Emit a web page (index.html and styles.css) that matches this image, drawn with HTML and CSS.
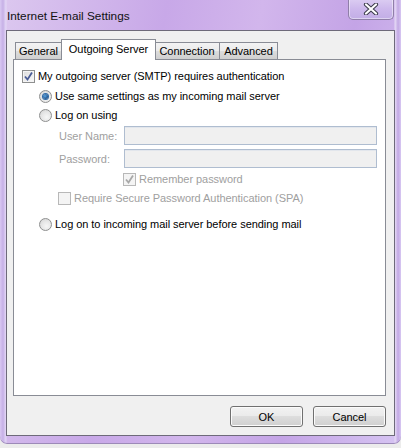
FILE: index.html
```html
<!DOCTYPE html>
<html>
<head>
<meta charset="utf-8">
<link rel="stylesheet" href="styles.css">
</head>
<body>
<div class="window">
  <div class="titlebar">
    <span class="title">Internet E-mail Settings</span>
    <div class="close">
      <svg width="20" height="12" viewBox="0 0 20 12">
        <path d="M5 1.5 L15 10.5 M15 1.5 L5 10.5" stroke="#3b3b4a" stroke-width="4.2" stroke-linecap="round"/>
        <path d="M5 1.5 L15 10.5 M15 1.5 L5 10.5" stroke="#ffffff" stroke-width="2.2" stroke-linecap="round"/>
      </svg>
    </div>
  </div>
  <div class="client">
    <div class="tabs">
      <div class="tab t-general">General</div>
      <div class="tab active t-outgoing">Outgoing Server</div>
      <div class="tab t-connection">Connection</div>
      <div class="tab t-advanced">Advanced</div>
    </div>
    <div class="panel">
      <div class="row r1">
        <span class="check checked"><svg width="11" height="11" viewBox="0 0 11 11"><path d="M2 5.5 L4.5 8.5 L9 1.5" fill="none" stroke="#4a5c96" stroke-width="1.8"/></svg></span>
        <span class="lbl">My outgoing server (SMTP) requires authentication</span>
      </div>
      <div class="row r2 ind1">
        <span class="radio on"><span class="dot"></span></span>
        <span class="lbl">Use same settings as my incoming mail server</span>
      </div>
      <div class="row r3 ind1">
        <span class="radio"></span>
        <span class="lbl">Log on using</span>
      </div>
      <div class="field f1">
        <span class="flabel">User Name:</span>
        <span class="input"></span>
      </div>
      <div class="field f2">
        <span class="flabel">Password:</span>
        <span class="input"></span>
      </div>
      <div class="row r6 ind3">
        <span class="check disabled"><svg width="11" height="11" viewBox="0 0 11 11"><path d="M2 5.5 L4.5 8.5 L9 1.5" fill="none" stroke="#a8a8a8" stroke-width="1.8"/></svg></span>
        <span class="lbl dis">Remember password</span>
      </div>
      <div class="row r7 ind2">
        <span class="check disabled"></span>
        <span class="lbl dis">Require Secure Password Authentication (SPA)</span>
      </div>
      <div class="row r8 ind1">
        <span class="radio"></span>
        <span class="lbl">Log on to incoming mail server before sending mail</span>
      </div>
    </div>
    <div class="buttons">
      <div class="btn">OK</div>
      <div class="btn">Cancel</div>
    </div>
  </div>
</div>
</body>
</html>
```
FILE: styles.css
```css
html, body {
  margin: 0;
  padding: 0;
}
body {
  width: 401px;
  height: 448px;
  background: #ececec;
  font-family: "Liberation Sans", Arial, sans-serif;
  font-size: 11px;
  letter-spacing: -0.05px;
  overflow: hidden;
}
.window {
  width: 401px;
  height: 444px;
  box-sizing: border-box;
  padding: 0 6px 8px 6px;
  border-radius: 0 0 7px 7px;
  background:
    linear-gradient(to right, #d9c8f2 0px, #c6b0e6 3px, #e4d8f6 6px, transparent 7px, transparent 394px, #e6daf6 395px, #c2a8e4 398px, #d8c8f2 401px),
    linear-gradient(100deg, #dcc8ef 0%, #c8a8e8 35%, #d2b6ec 55%, #c4a4e6 75%, #d6c4f2 100%);
  display: flex;
  flex-direction: column;
  box-shadow: inset 0 -1px 0 #9c8ab8;
}
.titlebar {
  height: 30px;
  display: flex;
  align-items: flex-start;
  position: relative;
}
.title {
  margin: 9px 0 0 1px;
  color: #111;
  font-size: 11.8px;
  letter-spacing: 0;
}
.close {
  position: absolute;
  right: 1px;
  top: -1px;
  width: 44px;
  height: 20px;
  border: 1px solid #8f7fa8;
  border-top: none;
  border-radius: 0 0 5px 5px;
  background: linear-gradient(#dccdf2, #cdb8ec 50%, #c2aee6);
  box-shadow: inset 0 0 0 1px rgba(255,255,255,0.45);
  display: flex;
  align-items: center;
  justify-content: center;
}
.client {
  flex: 1;
  background: #f0f0f0;
  border: 1px solid #6e6a7a;
  display: flex;
  flex-direction: column;
  padding: 8px 8px 8px 6px;
}
.tabs {
  display: flex;
  align-items: flex-end;
  height: 20px;
  padding-left: 2px;
  position: relative;
  z-index: 2;
}
.tab {
  box-sizing: border-box;
  height: 17px;
  line-height: 17px;
  border: 1px solid #898c95;
  border-bottom: none;
  border-left: none;
  background: linear-gradient(#f3f3f3, #ebebeb 50%, #dddddd 51%, #cfcfcf);
  color: #000;
  text-align: center;
  white-space: nowrap;
}
.t-general {
  width: 47px;
  border-left: 1px solid #898c95;
}
.t-outgoing { width: 95px; }
.t-connection { width: 65px; }
.t-advanced { width: 58px; }
.tab.active {
  height: 21px;
  line-height: 18px;
  background: #ffffff;
  margin: 0 -1px -1px -1px;
  border-left: 1px solid #898c95;
  position: relative;
}
.panel {
  flex: 1;
  background: #ffffff;
  border: 1px solid #898c95;
  display: flex;
  flex-direction: column;
  padding: 0;
}
.row {
  display: flex;
  align-items: center;
  height: 20px;
}
.r1 { margin-top: 6px; padding-left: 8px; }
.r2 { margin-top: 0; }
.r3 { margin-top: -1px; }
.ind1 { padding-left: 25px; }
.ind2 { padding-left: 44px; }
.ind3 { padding-left: 109px; }
.r6 { margin-top: 1px; }
.r7 { margin-top: -1px; }
.r8 { margin-top: 6px; }
.lbl {
  margin-left: 3px;
  color: #000;
  white-space: nowrap;
}
.lbl.dis { color: #a0a0a0; }
.check {
  width: 11px;
  height: 11px;
  border: 1px solid #8e8f8f;
  background: linear-gradient(135deg, #dcdcdc, #fafafa);
  box-shadow: inset 0 0 0 1px #f4f4f4;
  display: inline-flex;
  flex: none;
}
.check.disabled {
  border-color: #b8b8b8;
  background: #f4f4f4;
  box-shadow: none;
}
.radio {
  width: 11px;
  height: 11px;
  border: 1px solid #8e8f8f;
  border-radius: 50%;
  background: radial-gradient(circle at 60% 65%, #f6f6f6 0%, #e6e6e6 50%, #cfcfcf 100%);
  display: inline-flex;
  align-items: center;
  justify-content: center;
  flex: none;
}
.dot {
  width: 5px;
  height: 5px;
  border-radius: 50%;
  background: radial-gradient(circle at 40% 40%, #5aa7e6, #1f4f86 70%);
  box-shadow: 0 0 0 1px #2d6aa8;
}
.field {
  display: flex;
  align-items: center;
  height: 19px;
  padding-left: 45px;
}
.f1 { margin-top: 1px; }
.f2 { margin-top: 4px; }
.flabel {
  width: 65px;
  color: #a0a0a0;
  white-space: nowrap;
}
.input {
  width: 251px;
  height: 17px;
  border: 1px solid #afbdd0;
  background: #f0f0f0;
  box-shadow: inset 0 1px 0 #e2e6ec;
}
.buttons {
  display: flex;
  justify-content: flex-end;
  gap: 10px;
  margin-top: 10px;
}
.btn {
  width: 71px;
  height: 19px;
  border: 1px solid #707070;
  border-radius: 3px;
  background: linear-gradient(#f2f2f2, #ebebeb 45%, #dddddd 50%, #cfcfcf);
  box-shadow: inset 0 0 0 1px #fbfbfb;
  display: flex;
  align-items: center;
  justify-content: center;
  color: #000;
}
```
